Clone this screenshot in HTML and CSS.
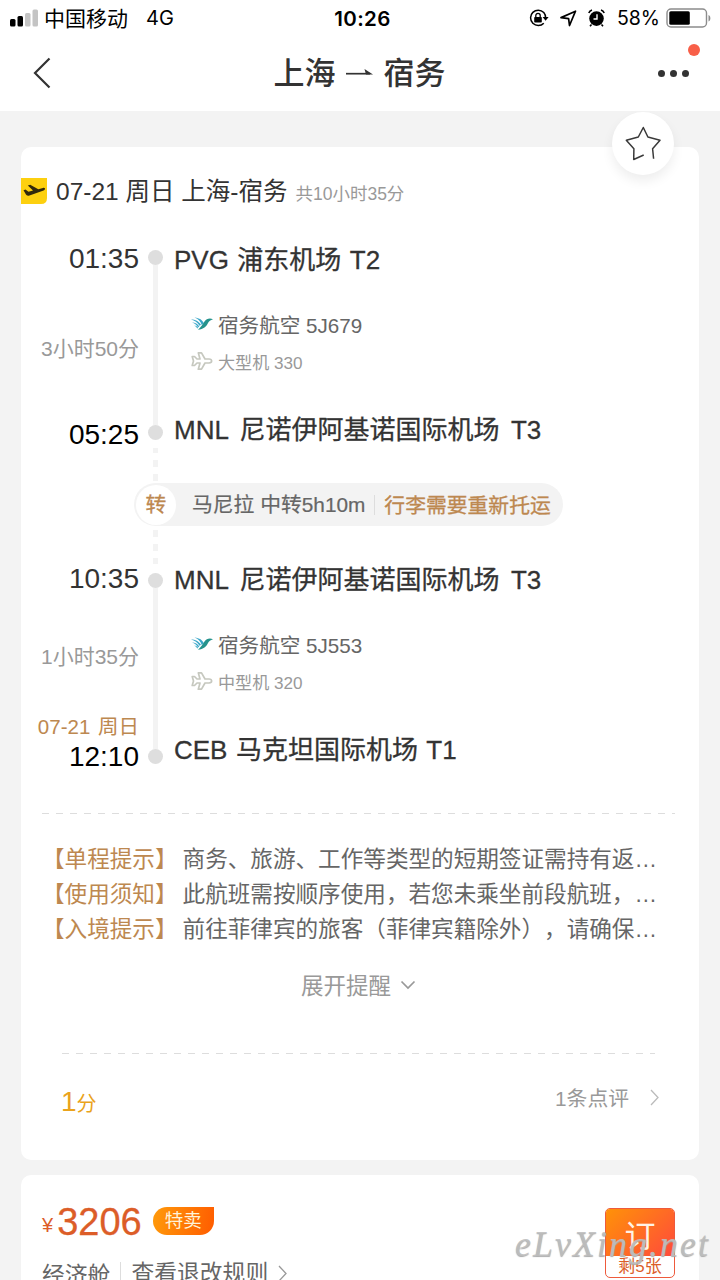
FILE: index.html
```html
<!DOCTYPE html>
<html lang="zh-CN">
<head>
  <meta charset="UTF-8">
  <meta name="viewport" content="width=device-width, initial-scale=1.0">
  <title>上海 - 宿务</title>
  <link rel="stylesheet" href="styles.css">
</head>
<body>
  <!-- shared icons -->
  <svg class="hidden">
    <symbol id="airline" viewBox="0 0 22 14">
      <path d="M0 2.500C4.500 2.600 7.500 4 10 7.800L8.500 8.800C6.500 5.500 4 3.600 0 2.500Z" fill="#3aa6c8"/>
      <path d="M1 5.600C4.500 5.600 6.500 6.800 8.300 9.500L7 10.300C5.300 7.600 3.800 6.600 1 5.600Z" fill="#3aa6c8"/>
      <path d="M3 8.500C5 8.500 6.200 9.300 7.400 10.800L6.200 11.400C5.300 10 4.500 9.300 3 8.500Z" fill="#56b8cf"/>
      <path d="M3.500 .6C8.500 1 11.500 3.200 13 6.500L10.800 8C9.500 4.300 7.500 2.300 3.500 .6Z" fill="#3aa6c8"/>
      <path d="M22 2.300C18.500 .8 15.500 1.800 13.300 4.800C11.500 8 10 9.800 7 12.800C12.500 12 15.500 9.500 17 6C18 4 19.500 3.200 22 2.300Z" fill="#25938c"/>
    </symbol>
    <symbol id="plane" viewBox="0 0 22 20">
      <path d="M1.200 5.500H3.500L6 8H9L7.300 1.800H10.500L14 8H18C21.500 8.200 21.500 11.800 18 12H14L10.500 18.200H7.300L9 12H6L3.500 14.500H1.200L2.500 10Z" fill="none" stroke="#c6c8bf" stroke-width="1.700" stroke-linejoin="round"/>
    </symbol>
  </svg>

  <header class="header">
    <div class="status-bar">
      <div class="status-left">
        <svg class="signal" width="29" height="18" viewBox="0 0 29 18">
          <rect x="0" y="10" width="5.500" height="7.500" rx="1.500" fill="#000"/>
          <rect x="7.500" y="7" width="5.500" height="10.500" rx="1.500" fill="#000"/>
          <rect x="15" y="4" width="5.500" height="13.500" rx="1.500" fill="#c4c4c4"/>
          <rect x="22.500" y="0.500" width="5.500" height="17" rx="1.500" fill="#c4c4c4"/>
        </svg>
        <span class="carrier">中国移动</span>
        <span class="network">4G</span>
      </div>
      <div class="clock">10:26</div>
      <div class="status-right">
        <svg width="20" height="18" viewBox="0 0 20 18">
          <path d="M14.800 3.500A7.700 7.700 0 1 0 14.800 14.200M14.800 3.500A7.700 7.700 0 0 1 16.600 9" fill="none" stroke="#000" stroke-width="1.500"/>
          <path d="M13.600 8H19.600L16.600 11.800Z"/>
          <rect x="5.200" y="8" width="7.600" height="5.500" rx=".8"/>
          <path d="M6.800 8.300V6.500A2.200 2.200 0 0 1 11.200 6.500V8.300" fill="none" stroke="#000" stroke-width="1.300"/>
        </svg>
        <svg class="location" width="17" height="17" viewBox="0 0 17 17">
          <path d="M1 7.600L15.500 1.200L9.500 15.500L8.600 8.600Z" fill="none" stroke="#000" stroke-width="1.700" stroke-linejoin="round"/>
        </svg>
        <svg class="alarm" width="17" height="18" viewBox="0 0 17 18">
          <circle cx="8.500" cy="9.600" r="7.300"/>
          <path d="M.8 4A5 5 0 0 1 4 1M13 1A5 5 0 0 1 16.200 4M3.500 15.500L2 17.200M13.500 15.500L15 17.200" fill="none" stroke="#000" stroke-width="1.600"/>
          <path d="M9 5.200V10H5.500" fill="none" stroke="#fff" stroke-width="1.400"/>
        </svg>
        <span class="percent">58%</span>
        <svg width="46" height="21" viewBox="0 0 46 21">
          <rect x="1" y="1" width="39.500" height="18" rx="4" fill="none" stroke="#8c8c8c" stroke-width="1.400"/>
          <rect x="3.300" y="3.300" width="20.500" height="13.400" rx="1.500"/>
          <path d="M42.500 7V13.500C45 12.500 45 8 42.500 7Z" fill="#8c8c8c"/>
        </svg>
      </div>
    </div>
    <nav class="nav">
      <svg class="back" width="18" height="32" viewBox="0 0 18 32"><path d="M16.500 1.500L2 16L16.500 30.500" fill="none" stroke="#333" stroke-width="2.200"/></svg>
      <h1 class="title">
        <span>上海</span>
        <svg width="28" height="12" viewBox="0 0 28 12"><path d="M0 7.700H24" stroke="#333" stroke-width="1.700"/><path d="M18.500 3L27 8.500H20Z" fill="#333"/></svg>
        <span>宿务</span>
      </h1>
      <div class="more"><i></i><i></i><i></i><b class="badge"></b></div>
    </nav>
  </header>

  <main class="content">
    <section class="card flight">
      <button class="favorite">
        <svg width="36" height="36" viewBox="0 0 36 36"><path d="M18.700 29L8.700 33.500L8.900 22.700L1.300 14.200L13.300 11L18.300 1.500L22.900 11L35 14.200L27.600 22.700L28.600 32.700" fill="none" stroke="#3a3a3a" stroke-width="1.500" stroke-linejoin="round"/></svg>
      </button>
      <div class="flight-head">
        <svg width="26" height="26" viewBox="0 0 26 26">
          <path d="M0 0H26V20Q26 26 20 26H0Z" fill="#fdd00f"/>
          <path d="M2.500 12.300L4.500 11.500L7.500 13.700L12 12.500L6.800 7.500L9.200 6.700L17.300 11.200L22 9.900C24.500 9.600 24.700 11.700 22.600 12.500L8.500 17.500C6.500 18.200 5.500 17.500 4.800 16.300Z" fill="#32290c"/>
        </svg>
        <span class="route">07-21 周日 上海-宿务</span>
        <span class="total">共10小时35分</span>
      </div>

      <div class="leg">
        <div class="times">
          <div class="time">01:35</div>
          <div class="duration">3小时50分</div>
          <div class="time dark">05:25</div>
        </div>
        <div class="rail"><i class="dot"></i><i class="line"></i><i class="dot"></i></div>
        <div class="stops">
          <div class="airport">PVG 浦东机场 T2</div>
          <div class="airline"><svg width="22" height="14"><use href="#airline"/></svg>宿务航空 5J679</div>
          <div class="aircraft"><svg width="22" height="20"><use href="#plane"/></svg>大型机 330</div>
          <div class="airport wide">MNL 尼诺伊阿基诺国际机场 T3</div>
        </div>
      </div>

      <div class="transfer">
        <div class="transfer-pill">
          <span class="transfer-icon">转</span>
          <span class="transfer-city">马尼拉 中转5h10m</span>
          <span class="transfer-note">行李需要重新托运</span>
        </div>
      </div>

      <div class="leg leg-last">
        <div class="times">
          <div class="time">10:35</div>
          <div class="duration">1小时35分</div>
          <div class="date">07-21 周日</div>
          <div class="time dark">12:10</div>
        </div>
        <div class="rail"><i class="dot"></i><i class="line"></i><i class="dot"></i></div>
        <div class="stops">
          <div class="airport wide">MNL 尼诺伊阿基诺国际机场 T3</div>
          <div class="airline"><svg width="22" height="14"><use href="#airline"/></svg>宿务航空 5J553</div>
          <div class="aircraft"><svg width="22" height="20"><use href="#plane"/></svg>中型机 320</div>
          <div class="airport">CEB 马克坦国际机场 T1</div>
        </div>
      </div>

      <div class="divider"></div>
      <ul class="notices">
        <li><span class="tag">【单程提示】</span>商务、旅游、工作等类型的短期签证需持有返…</li>
        <li><span class="tag">【使用须知】</span>此航班需按顺序使用，若您未乘坐前段航班，…</li>
        <li><span class="tag">【入境提示】</span>前往菲律宾的旅客（菲律宾籍除外），请确保…</li>
      </ul>
      <div class="expand"><span>展开提醒</span>
        <svg width="16" height="10" viewBox="0 0 16 10"><path d="M1.500 1.500L8 8L14.500 1.500" fill="none" stroke="#999" stroke-width="1.700"/></svg>
      </div>
      <div class="divider divider-short"></div>
      <div class="review">
        <div class="score">1<small>分</small></div>
        <div class="comments">1条点评
          <svg width="9" height="17" viewBox="0 0 9 17"><path d="M1 1L8 8.500L1 16" fill="none" stroke="#bbb" stroke-width="1.300"/></svg>
        </div>
      </div>
    </section>

    <section class="card offer">
      <div class="offer-info">
        <div class="price-row">
          <span class="currency">¥</span>
          <span class="price">3206</span>
          <span class="sale">特卖</span>
        </div>
        <div class="cabin">
          <span>经济舱</span>
          <span class="rules">查看退改规则</span>
          <svg width="10" height="17" viewBox="0 0 10 17"><path d="M1 1L8 8.500L1 16" fill="none" stroke="#999" stroke-width="1.300"/></svg>
        </div>
      </div>
      <div class="book">
        <div class="book-btn">订</div>
        <div class="book-left">剩5张</div>
      </div>
    </section>
  </main>
  <div class="watermark">eLvXing.net</div>
</body>
</html>
```
FILE: styles.css
```css
* {
  box-sizing: border-box;
}
body {
  margin: 0;
  height: 1280px;
  overflow: hidden;
  position: relative;
  background: #f3f3f3;
  color: #333;
  font-family: "Liberation Sans", "Noto Sans CJK SC", sans-serif;
  text-spacing-trim: space-all;
}
.hidden {
  display: none;
}
svg {
  display: block;
  flex: none;
}

/* header */
.header {
  height: 111px;
  background: #fff;
}
.status-bar {
  display: grid;
  grid-template-columns: 1fr auto 1fr;
  align-items: center;
  height: 36px;
  padding: 0 8px 0 10px;
  color: #000;
}
.status-left,
.status-right {
  display: flex;
  align-items: center;
}
.signal {
  margin-right: 5px;
}
.carrier {
  margin-top: -2px;
  font-size: 21px;
}
.network {
  margin-left: 18px;
  font-family: Inter, sans-serif;
  font-size: 20px;
}
.clock {
  padding-left: 3px;
  font-family: Inter, sans-serif;
  font-size: 20.5px;
  font-weight: 600;
  letter-spacing: 0.4px;
}
.status-right {
  justify-content: flex-end;
}
.location {
  margin-left: 11px;
}
.alarm {
  margin-left: 11px;
}
.percent {
  margin: 0 6px 0 12px;
  font-family: Inter, sans-serif;
  font-size: 19.5px;
}
.nav {
  display: flex;
  justify-content: space-between;
  align-items: center;
  height: 74px;
  padding: 0 31px 0 33px;
}
.title {
  display: flex;
  align-items: center;
  gap: 10px;
  margin: -5px 0 0;
  padding-left: 10px;
  font-size: 31px;
  font-weight: 500;
}
.title svg {
  margin-top: 2px;
}
.more {
  position: relative;
  display: flex;
  gap: 5px;
}
.more i {
  width: 7px;
  height: 7px;
  border-radius: 50%;
  background: #333;
}
.badge {
  position: absolute;
  top: -26px;
  right: -11px;
  width: 12px;
  height: 12px;
  border-radius: 50%;
  background: #f85f48;
}

/* cards */
.content {
  padding: 36px 21px 0;
}
.card {
  position: relative;
  background: #fff;
  border-radius: 10px;
}
.flight {
  height: 1013px;
  padding-top: 30px;
}
.favorite {
  position: absolute;
  top: -35px;
  right: 25px;
  display: flex;
  justify-content: center;
  align-items: center;
  width: 62px;
  height: 63px;
  padding: 0;
  border: none;
  border-radius: 50%;
  background: #fff;
  box-shadow: 0 6px 12px rgba(0, 0, 0, 0.07);
}
.flight-head {
  display: flex;
  align-items: center;
  height: 28px;
}
.route {
  margin: -3px 0 0 9px;
  font-size: 24.5px;
}
.total {
  margin: 2px 0 0 8px;
  font-size: 17.5px;
  color: #999;
}

/* timeline */
.leg {
  display: grid;
  grid-template-columns: 118px 33px 1fr;
  height: 204px;
  margin-top: 39px;
}
.leg-last {
  height: 206px;
  margin-top: 0;
}
.times {
  text-align: right;
  line-height: 28px;
}
.time {
  position: relative;
  top: 1px;
  font-size: 28px;
}
.time.dark {
  margin-top: 57px;
  color: #000;
}
.duration {
  margin-top: 63px;
  font-size: 21px;
  color: #999;
}
.date {
  margin-top: 42px;
  font-size: 20.5px;
  word-spacing: 2px;
  color: #bd8850;
}
.leg-last .duration {
  margin-top: 51px;
}
.leg-last .time.dark {
  margin-top: 1px;
}
.rail {
  display: flex;
  flex-direction: column;
  align-items: center;
  padding: 6px 0 8px;
}
.leg-last .rail {
  padding: 9px 0 6px;
}
.dot {
  width: 15px;
  height: 15px;
  border-radius: 50%;
  background: #dedede;
}
.line {
  flex: 1;
  width: 5px;
  background: #f3f3f3;
}
.airport {
  padding-left: 2px;
  font-size: 26px;
  line-height: 32px;
  white-space: nowrap;
  word-spacing: 1.2px;
  -webkit-text-stroke: 0.3px #333;
}
.airport.wide {
  word-spacing: 4.3px;
}
.airline,
.aircraft {
  display: flex;
  align-items: center;
  gap: 5px;
  padding-left: 19px;
}
.airline {
  height: 30px;
  margin-top: 33px;
  font-size: 20.6px;
  color: #666;
}
.aircraft {
  height: 22px;
  margin: 11px 0 42px;
  font-size: 17.1px;
  color: #999;
}
.transfer {
  height: 116px;
  padding: 35px 0 0 113px;
  background: repeating-linear-gradient(#f3f3f3 0 5px, #fff 5px 12px, #f3f3f3 12px 14px) no-repeat 132px 0 / 5px 100%;
}
.transfer-pill {
  display: inline-flex;
  align-items: center;
  height: 43px;
  padding: 0 12px 0 2px;
  border-radius: 22px;
  background: #f3f3f3;
  font-size: 20.8px;
  white-space: nowrap;
}
.transfer-icon {
  width: 40px;
  height: 40px;
  border-radius: 50%;
  background: #fff;
  color: #bd8850;
  line-height: 40px;
  text-align: center;
  -webkit-text-stroke: 0.3px #bd8850;
}
.transfer-city {
  margin-left: 16px;
  padding-right: 9px;
  border-right: 1px solid #ddd;
  color: #666;
  line-height: 20px;
  -webkit-text-stroke: 0.2px #666;
}
.transfer-note {
  margin: -2px 0 0 9px;
  color: #bd8850;
  -webkit-text-stroke: 0.3px #bd8850;
}

/* notices */
.divider {
  height: 1px;
  margin: 43px 24px 0 21px;
  background: repeating-linear-gradient(90deg, #ddd 0 7px, #fff 7px 14px);
}
.divider-short {
  margin: 53px 44px 0 41px;
}
.notices {
  margin: 28px 0 0;
  padding: 0 0 0 21px;
  list-style: none;
  font-size: 22.6px;
  line-height: 35px;
  color: #666;
  white-space: nowrap;
}
.tag {
  margin-right: 5px;
  color: #bd8850;
}
.expand {
  display: flex;
  align-items: center;
  gap: 9px;
  height: 30px;
  margin-top: 23px;
  padding-left: 280px;
  font-size: 22.5px;
  color: #999;
}
.expand span {
  margin-top: -3px;
}
.review {
  display: flex;
  justify-content: space-between;
  margin-top: 30px;
  padding: 0 40px;
}
.score {
  font-size: 28px;
  line-height: 36px;
  color: #eaa31c;
}
.score small {
  font-size: 20px;
}
.comments {
  display: flex;
  align-items: center;
  gap: 21px;
  height: 26px;
  font-size: 20.8px;
  color: #999;
}

/* price */
.offer {
  display: flex;
  justify-content: space-between;
  height: 140px;
  margin-top: 15px;
  padding: 27px 24px 0 21px;
}
.price-row {
  display: flex;
  align-items: center;
  height: 38px;
  color: #dc5d28;
}
.currency {
  margin-top: 9px;
  font-size: 20px;
}
.price {
  margin: 2px 0 0 4px;
  font-size: 38px;
  -webkit-text-stroke: 0.3px #dc5d28;
}
.sale {
  width: 61px;
  height: 28px;
  margin-left: 11px;
  border-radius: 14px 0 14px 14px;
  background: linear-gradient(100deg, #ff9a0a, #ff5c00);
  color: #fff3d8;
  font-size: 18.5px;
  line-height: 27px;
  text-align: center;
}
.cabin {
  display: flex;
  align-items: center;
  height: 30px;
  margin-top: 18px;
  font-size: 22.8px;
  color: #666;
}
.rules {
  margin: 0 10px;
  padding-left: 10px;
  border-left: 1px solid #ddd;
  line-height: 22px;
}
.book {
  width: 70px;
  height: 70px;
  margin-top: 6px;
  border: 1px solid #ee5a3c;
  border-radius: 5px;
  overflow: hidden;
  text-align: center;
}
.book-btn {
  height: 47px;
  background: linear-gradient(135deg, #ff9208, #ff4a3c);
  color: #fff3e6;
  font-size: 31px;
  line-height: 56px;
}
.book-left {
  font-size: 17px;
  line-height: 22px;
  color: #dc5d28;
}
.watermark {
  position: absolute;
  left: 515px;
  top: 1222px;
  color: rgba(190, 190, 190, 0.9);
  font-family: "Liberation Serif", serif;
  font-size: 36px;
  font-style: italic;
  line-height: 44px;
  letter-spacing: 2px;
  text-shadow: 0 1px 1px #aaa;
}
```
